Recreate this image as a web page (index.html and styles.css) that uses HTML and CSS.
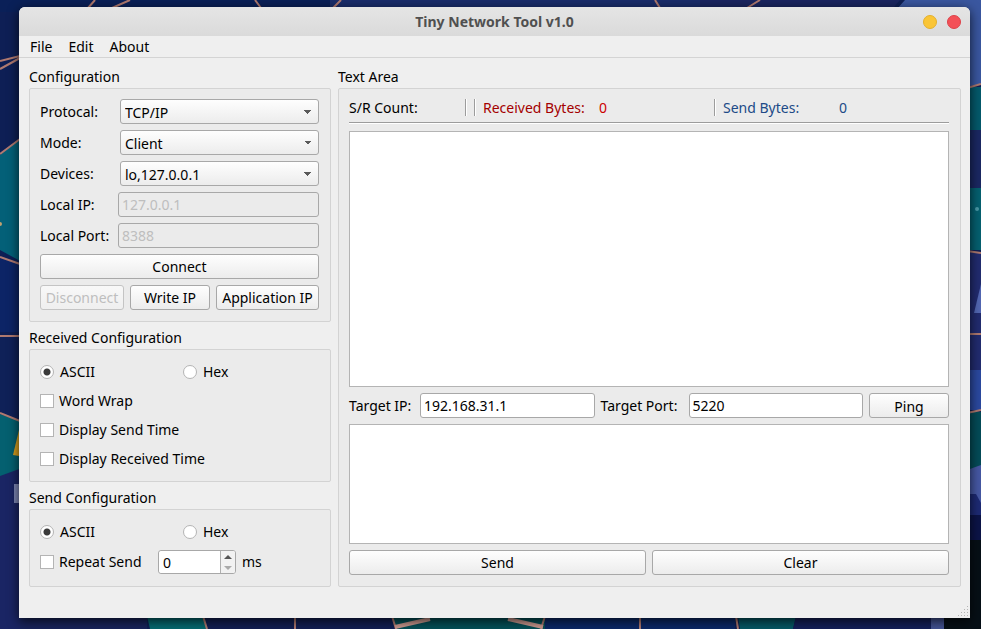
FILE: index.html
```html
<!DOCTYPE html>
<html lang="en">
<head>
<meta charset="utf-8">
<title>Tiny Network Tool v1.0</title>
<link rel="stylesheet" href="styles.css">
</head>
<body>
<svg class="wallpaper" viewBox="0 0 981 629" preserveAspectRatio="none" aria-hidden="true">
  <rect width="981" height="629" fill="#0e1f55"/>
  <path d="M0 0H330V12H0Z" fill="#0a2058"/>
  <path d="M330 0H700V12H330Z" fill="#1a2d6c"/>
  <path d="M700 0H900L890 12H700Z" fill="#1a2560"/>
  <path d="M905 0H981V84L960 88V10H896Z" fill="#3a57a0"/>
  <path d="M0 155L22 138V262L0 250Z" fill="#036078"/>
  <path d="M0 256L22 264V332H0Z" fill="#0c2466"/>
  <path d="M0 336H22V420L0 412Z" fill="#0f2158"/>
  <path d="M0 414L22 422V480H0Z" fill="#046070"/>
  <path d="M0 476L22 468V629H0Z" fill="#1a2564"/>
  <path d="M13 455L19 430V456Z" fill="#d9a020"/>
  <path d="M14 484H20V503H14Z" fill="#7d87b4"/>
  <circle cx="0" cy="224" r="2" fill="#c0a070"/>
  <path d="M967 87H981V130H967Z" fill="#045a6c"/>
  <path d="M967 130H981V188H967Z" fill="#1b2863"/>
  <path d="M967 188H981V250H967Z" fill="#056070"/>
  <circle cx="977" cy="209" r="2" fill="#4a9aa8"/>
  <path d="M967 252H981V410H967Z" fill="#222c70"/>
  <path d="M974 313L981 284V313Z" fill="#5368b4"/>
  <path d="M967 370H981V410H967Z" fill="#2b49a0"/>
  <path d="M967 412H981V466L967 470Z" fill="#044c58"/>
  <path d="M967 470L981 465V515H967Z" fill="#4658a4"/>
  <path d="M967 494H976L981 503V515H967Z" fill="#1d2a74"/>
  <path d="M967 515H981V540H967Z" fill="#0c1448"/>
  <path d="M967 540H981V629H944V615H967Z" fill="#060f16"/>
  <path d="M20 616H147V629H20Z" fill="#18245c"/>
  <path d="M147 616H204L207 629H150Z" fill="#056a70"/>
  <path d="M208 616H390V629H208Z" fill="#131f54"/>
  <path d="M392 616H545V629H396Z" fill="#045058"/>
  <path d="M545 616H735V629H545Z" fill="#0b2867"/>
  <path d="M738 616H796L793 629H740Z" fill="#055865"/>
  <path d="M796 616H931V629H793Z" fill="#14205a"/>
  <path d="M931 616H944V629H931Z" fill="#435393"/>
  <g fill="none" stroke="#b07a70" stroke-width="2">
    <path d="M0 61L20 56M0 69L20 58M88 8L95 0M112 8L130 0M255 0L261 8M333 8L341 0M655 0L660 8M747 8L760 0M0 154L20 139M0 257L20 264M0 336H20M0 413L20 421M967 88L981 84M967 251L981 253M967 334H981M967 413L981 410M203 616L207 629M295 616V629M392 616L396 629M545 616L541 629M640 616V629M736 616L738 629"/>
    <path d="M395 627L430 619M508 619L543 627" stroke="#cc9a90" stroke-width="4"/>
  </g>
</svg>
<main class="window">
  <header class="titlebar">
    <h1>Tiny Network Tool v1.0</h1>
    <div class="window-buttons">
      <button type="button" class="dot minimize" aria-label="Minimize"></button>
      <button type="button" class="dot close" aria-label="Close"></button>
    </div>
  </header>
  <nav class="menubar">
    <button type="button">File</button>
    <button type="button">Edit</button>
    <button type="button">About</button>
  </nav>
  <div class="content">
    <div class="column">
      <section class="group">
        <h2>Configuration</h2>
        <div class="panel">
          <div class="field"><label for="protocol">Protocal:</label><select id="protocol"><option>TCP/IP</option></select></div>
          <div class="field"><label for="mode">Mode:</label><select id="mode"><option>Client</option></select></div>
          <div class="field"><label for="devices">Devices:</label><select id="devices"><option>lo,127.0.0.1</option></select></div>
          <div class="field address"><label for="local-ip">Local IP:</label><input id="local-ip" type="text" value="127.0.0.1" disabled></div>
          <div class="field address"><label for="local-port">Local Port:</label><input id="local-port" type="text" value="8388" disabled></div>
          <button type="button" class="push">Connect</button>
          <div class="actions">
            <button type="button" class="push" disabled>Disconnect</button>
            <button type="button" class="push">Write IP</button>
            <button type="button" class="push">Application IP</button>
          </div>
        </div>
      </section>
      <section class="group">
        <h2>Received Configuration</h2>
        <div class="panel">
          <div class="choices">
            <label class="check"><input type="radio" name="receive-format" checked>ASCII</label>
            <label class="check"><input type="radio" name="receive-format">Hex</label>
          </div>
          <label class="check"><input type="checkbox">Word Wrap</label>
          <label class="check"><input type="checkbox">Display Send Time</label>
          <label class="check"><input type="checkbox">Display Received Time</label>
        </div>
      </section>
      <section class="group">
        <h2>Send Configuration</h2>
        <div class="panel">
          <div class="choices">
            <label class="check"><input type="radio" name="send-format" checked>ASCII</label>
            <label class="check"><input type="radio" name="send-format">Hex</label>
          </div>
          <div class="repeat">
            <label class="check"><input type="checkbox">Repeat Send</label>
            <div class="spin">
              <input id="interval" type="text" value="0" aria-label="Repeat interval">
              <div class="steps">
                <button type="button" aria-label="Increase"><svg viewBox="0 0 8 4"><path d="M0 4L4 0L8 4Z" fill="#555"/></svg></button>
                <button type="button" aria-label="Decrease"><svg viewBox="0 0 8 4"><path d="M0 0L4 4L8 0Z" fill="#aaa"/></svg></button>
              </div>
            </div>
            <label for="interval">ms</label>
          </div>
        </div>
      </section>
    </div>
    <section class="group">
      <h2>Text Area</h2>
      <div class="panel">
        <div class="counts">
          <span>S/R Count:</span>
          <span class="rule"></span>
          <div class="rule count received"><span>Received Bytes:</span><output>0</output></div>
          <div class="rule count sent"><span>Send Bytes:</span><output>0</output></div>
        </div>
        <hr>
        <textarea class="log" aria-label="Received text" readonly></textarea>
        <div class="target">
          <label for="target-ip">Target IP:</label>
          <input id="target-ip" type="text" value="192.168.31.1">
          <label for="target-port">Target Port:</label>
          <input id="target-port" type="text" value="5220">
          <button type="button" class="push">Ping</button>
        </div>
        <textarea class="message" aria-label="Text to send"></textarea>
        <div class="submit">
          <button type="button" class="push">Send</button>
          <button type="button" class="push">Clear</button>
        </div>
      </div>
    </section>
  </div>
  <svg class="grip" viewBox="0 0 12 12" aria-hidden="true"><path d="M9 0h1v1h-1zM6 3h1v1h-1zM9 3h1v1h-1zM3 6h1v1h-1zM6 6h1v1h-1zM9 6h1v1h-1zM0 9h1v1h-1zM3 9h1v1h-1zM6 9h1v1h-1zM9 9h1v1h-1z" fill="#b5b5b5"/></svg>
</main>
</body>
</html>
```
FILE: styles.css
```css
* { box-sizing: border-box; }

body {
  margin: 0;
  min-height: 100vh;
  padding: 7px 11px 11px 19px;
  display: flex;
  position: relative;
  font: 14px/20px "Noto Sans", "Open Sans", sans-serif;
  color: #000;
  background: #0e1f55;
}

button, input, select, textarea {
  font: inherit;
  color: inherit;
  margin: 0;
  padding: 0;
  min-width: 0;
}

h1, h2 { margin: 0; font-size: inherit; font-weight: 400; }

.wallpaper {
  position: absolute;
  inset: 0;
  width: 100%;
  height: 100%;
}

.window {
  position: relative;
  flex: 1;
  min-width: 0;
  display: flex;
  flex-direction: column;
  background: #efefef;
  border-radius: 6px 6px 0 0;
  box-shadow: 0 3px 12px rgba(0, 0, 0, .75);
}

.titlebar {
  display: grid;
  grid-template-columns: 1fr auto 1fr;
  align-items: center;
  height: 29px;
  padding: 0 9px;
  border-radius: 6px 6px 0 0;
  background: linear-gradient(#e5e5e5, #dadada);
  color: #505050;
}

.titlebar h1 { grid-column: 2; font-weight: 700; }

.window-buttons { display: flex; justify-content: flex-end; gap: 10px; }

.dot { width: 14px; height: 14px; border: 1px solid; border-radius: 50%; }
.minimize { background: #fac536; border-color: #e4b02c; }
.close { background: #f35057; border-color: #dd4249; }

.menubar {
  display: flex;
  gap: 16px;
  height: 22px;
  padding: 0 11px;
  border-bottom: 1px solid #d4d4d4;
}

.menubar button { border: 0; background: none; }

.content {
  flex: 1;
  display: grid;
  grid-template-columns: 302px minmax(0, 1fr);
  gap: 7px;
  padding: 10px 9px 31px 10px;
}

.column { display: flex; flex-direction: column; gap: 7px; }

.group { display: flex; flex-direction: column; }
.group h2 { padding-bottom: 2px; line-height: 18px; }

.panel {
  flex: 1;
  display: flex;
  flex-direction: column;
  gap: 6px;
  padding: 10px 11px 11px 10px;
  border: 1px solid #d3d3d3;
  border-radius: 2px;
  background: #ebebeb;
}

.field { display: flex; gap: 6px; line-height: 25px; }
.field label { flex: 0 0 74px; white-space: nowrap; }
.address label { flex-basis: 72px; }
.field select, .field input { flex: 1; }

select, .push, input[type="text"] {
  height: 25px;
  border: 1px solid #a8a8a8;
  border-radius: 3px;
}

select {
  appearance: none;
  padding: 0 4px 2px;
  background:
    linear-gradient(to bottom right, #5a5a5a 50%, transparent 50%) right 6px top 10px / 4px 4px no-repeat,
    linear-gradient(to bottom left, #5a5a5a 50%, transparent 50%) right 10px top 10px / 4px 4px no-repeat,
    linear-gradient(#fefefe, #ececec);
}

input[type="text"] { padding: 0 3px; background: #fff; }
input[type="text"]:disabled { background: #ebebeb; color: #bebebe; }

.push { background: linear-gradient(#fefefe, #ececec); white-space: nowrap; }
.push:disabled { color: #bebebe; border-color: #c4c4c4; background: linear-gradient(#f8f8f8, #efefef); }

.actions { display: grid; grid-template-columns: 84fr 80fr 103fr; gap: 6px; }

.check { display: flex; align-items: center; gap: 5px; height: 23px; white-space: nowrap; }
.choices .check { gap: 6px; }

.check input {
  appearance: none;
  flex: none;
  width: 14px;
  height: 14px;
  border: 1px solid #b4b4b4;
  background: #fff;
}

.check input[type="radio"] { border-radius: 50%; }
.check input[type="radio"]:checked { background: radial-gradient(circle, #3a3a3a 3px, #fff 4px); }

.choices { display: grid; grid-template-columns: 143px 1fr; }

.repeat { display: flex; align-items: center; gap: 6px; height: 26px; }
.repeat .check { width: 112px; }

.spin {
  display: flex;
  width: 78px;
  height: 24px;
  border: 1px solid #a8a8a8;
  border-radius: 3px;
  background: #fff;
  overflow: hidden;
}

.spin input[type="text"] { flex: 1; height: 22px; padding: 0 4px; border: 0; }
.steps { display: flex; flex-direction: column; width: 15px; border-left: 1px solid #b0b0b0; background: #f2f2f2; }
.steps button { flex: 1; display: grid; place-items: center; border: 0; background: none; }
.steps svg { width: 8px; height: 4px; }

.counts { display: grid; grid-template-columns: 116fr 9fr 240fr 235fr; height: 17px; line-height: 17px; }
.rule { border-left: 1px solid #9c9c9c; box-shadow: inset 1px 0 #fff; }
.count { display: grid; grid-template-columns: 116px auto; padding-left: 8px; white-space: nowrap; }
.received { color: #a40000; }
.received output { color: #cc0000; }
.sent { color: #204a87; }

hr { width: 100%; height: 3px; margin: 0; border: 0; background: linear-gradient(#9c9c9c 1px, #fff 1px, #fff 2px, transparent 2px); }

textarea {
  display: block;
  width: 100%;
  min-height: 60px;
  border: 1px solid #b4b4b4;
  background: #fff;
  resize: none;
}

.log { flex: 257 1 0; }
.message { flex: 119 1 0; }

.target { display: flex; gap: 6px; line-height: 25px; white-space: nowrap; }
.target label { flex: 0 0 65px; }
.target input + label { flex-basis: 82px; }
.target input { flex: 1; }
.target .push { width: 80px; }

.submit { display: grid; grid-template-columns: 1fr 1fr; gap: 6px; }

.grip { position: absolute; right: 0; bottom: 0; width: 12px; height: 12px; }
```
